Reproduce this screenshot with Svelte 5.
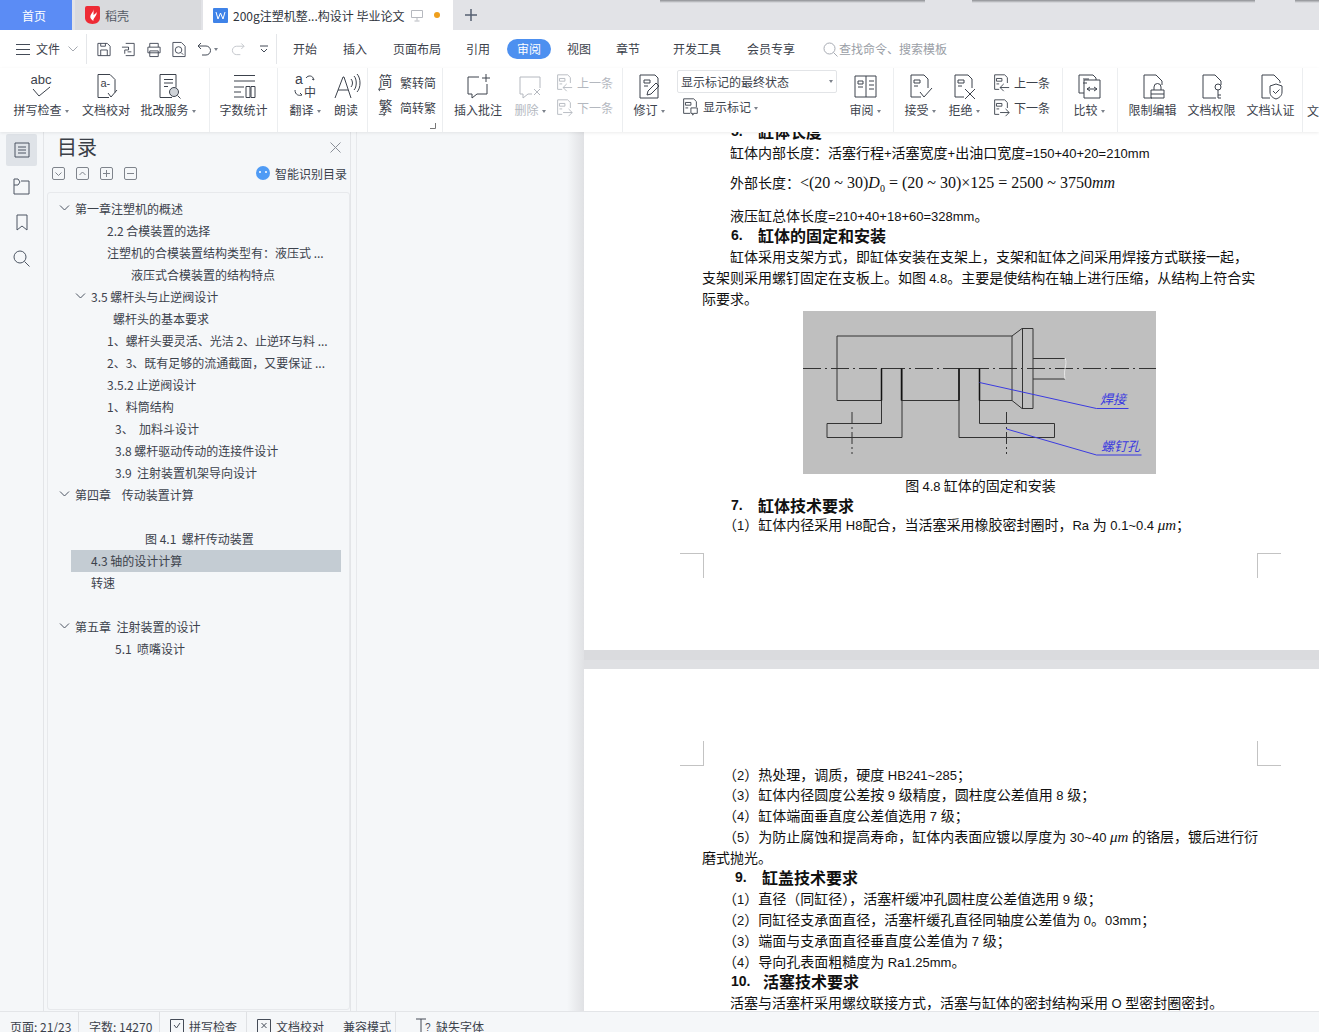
<script lang="ts">
  const ICONS: Record<string, string> = {
    spell: '<text x="14" y="12" text-anchor="middle" font-size="13" font-family="Liberation Sans" fill="currentColor" stroke="none">abc</text><path d="M6 17l6 7L23 15"/>',
    proof: '<path d="M6 2.500h12l5 5v13M6 2.500v23h11"/><text x="8.500" y="15" font-size="11" font-family="Liberation Sans" fill="currentColor" stroke="none">a-</text><path d="M16 21l3 4 6-7"/>',
    correct: '<path d="M6 2.500h16v13M6 2.500v23h12M10 7.500h9M10 11h9M10 14.500h4"/><circle cx="20" cy="20" r="4.500" fill="#cfd3d8"/><path d="M23.500 23.500l3 3"/>',
    count: '<path d="M4 3.500h21M4 9h21M4 15h10M4 20h7M4 25h10M16 14.500h4v11h-4zM21 14.500h4v11h-4z"/>',
    translate: '<text x="4" y="12" font-size="14" font-family="Liberation Sans" fill="currentColor" stroke="none">a</text><text x="13" y="25" font-size="12" font-family="Noto Sans CJK SC" fill="currentColor" stroke="none">中</text><path d="M15 6c2-3 7-3 8 2l-2-1M4 18c0 5 4 6 7 5l-2-2"/>',
    read: '<path d="M3 26L11 5h1l7 21M6 18h10M19 7c2 2 2 6 0 8M22 4c3 3 3 11 0 14M25 2c4 4 4 14 0 18"/>',
    comment: '<path d="M15 5H4v17h4v4l5-4h10V12M22 2v8M18 6h8"/>',
    delcmt: '<path d="M4 5h20v11M4 5v17h3v4l5-4h4M18 17l6 6M24 17l-6 6"/>',
    revise: '<path d="M6 3h14l3 3v20H5V3zM9 8h6v3H9zM9 14h4"/><path d="M12 23l1-4 8-8 3 3-8 8z"/>',
    pane: '<path d="M4 4h21v21H4zM15 4v21M7 9h5v3H7zM7 15h5M18 9h5M18 13h5M18 17h5"/>',
    accept: '<path d="M5 3h13l4 4v9M5 3v22h10M8 8h6v3H8zM8 14h4M14 20l4 5 8-9"/>',
    reject: '<path d="M5 3h13l4 4v9M5 3v22h9M8 8h6v3H8zM8 14h4M15 17l10 10M25 17L15 27"/>',
    compare: '<path d="M4 3h14l3 3v2M4 3v18h5M9 8h16v18H9zM8 7h6M8 11h4M12 17h10M12 17l3-2M12 17l3 2M22 17l-3-2M22 17l-3 2"/>',
    lock: '<path d="M5 3h12l6 6v4M5 3v23h8M12 18h13v8H12zM15 18v-3a3.500 3.500 0 0 1 7 0v3"/><path d="M12 22h13"/>',
    perm: '<path d="M5 3h12l6 6v4M5 3v23h13"/><circle cx="20" cy="15" r="3"/><path d="M20 18v8M20 23h3M20 26h3"/>',
    cert: '<path d="M5 3h12l6 6v2M5 3v23h8M13 14l6-2 6 2v6c0 4-3 6-6 7-3-1-6-3-6-7zM16 19l2.500 2.500 4-4"/>',
    docnext: '<path d="M3 2h11l3 3v6M3 2v16h5M5 6h6v3H5zM5 12h3M9 16h10M15 12l4 4-4 4"/>',
    docprev: '<path d="M3 2h11l3 3v6M3 2v16h5M5 6h6v3H5zM5 12h3M19 16H9M13 12l-4 4 4 4"/>',
    mark: '<path d="M3 2h11l3 3v6M3 2v16h7M5 6h6v3H5zM5 12h3M11 12h7v6h-4l-1 2v-2h-2z"/>',
    t2s: '<text x="1" y="14" font-size="15" font-family="Noto Sans CJK SC" fill="currentColor" stroke="none">简</text><path d="M1 18h7M2 16l-1 2 1 2"/>',
    s2t: '<text x="1" y="14" font-size="15" font-family="Noto Sans CJK SC" fill="currentColor" stroke="none">繁</text><path d="M1 18h7M6 16l2 2-2 2"/>',
  };

  const QUICK = [
    '<path d="M2 2h10l3 3v10H2zM5 15V9h7v6M5 2v3h5V2"/>',
    '<path d="M5 2h9v13H5M1 6h7v3H4v4M8 6v2M7 11h4"/>',
    '<path d="M4 6V2h9v4M2 6h13v6H2zM4 10h9v6H4z"/>',
    '<path d="M2 1h9l4 4v11H2z"/><circle cx="8" cy="9" r="3.500"/><path d="M11 12l2 2"/>',
  ];

  const MENU = [
    { t: "开始", w: 40 },
    { t: "插入", w: 60 },
    { t: "页面布局", w: 64 },
    { t: "引用", w: 58 },
    { t: "审阅", w: 44, active: true },
    { t: "视图", w: 56 },
    { t: "章节", w: 42 },
    { t: "开发工具", w: 96 },
    { t: "会员专享", w: 52 },
  ];

  const TOC = [
    { t: "第一章注塑机的概述", x: 75, chev: true },
    { t: "2.2 合模装置的选择", x: 107 },
    { t: "注塑机的合模装置结构类型有：液压式 ...", x: 107 },
    { t: "液压式合模装置的结构特点", x: 131 },
    { t: "3.5 螺杆头与止逆阀设计", x: 91, chev: true },
    { t: "螺杆头的基本要求", x: 113 },
    { t: "1、螺杆头要灵活、光洁 2、止逆环与料 ...", x: 107 },
    { t: "2、3、既有足够的流通截面，又要保证 ...", x: 107 },
    { t: "3.5.2 止逆阀设计", x: 107 },
    { t: "1、料筒结构", x: 107 },
    { t: "3、  加料斗设计", x: 115 },
    { t: "3.8 螺杆驱动传动的连接件设计", x: 115 },
    { t: "3.9  注射装置机架导向设计", x: 115 },
    { t: "第四章    传动装置计算", x: 75, chev: true },
    { t: "", x: 75 },
    { t: "图 4.1  螺杆传动装置", x: 145 },
    { t: "4.3 轴的设计计算", x: 91, active: true },
    { t: "转速", x: 91 },
    { t: "", x: 75 },
    { t: "第五章  注射装置的设计", x: 75, chev: true },
    { t: "5.1  喷嘴设计", x: 115 },
  ];

  const PAGE2 = [
    { t: "（2）热处理，调质，硬度 HB241~285；" },
    { t: "（3）缸体内径圆度公差按 9 级精度，圆柱度公差值用 8 级；" },
    { t: "（4）缸体端面垂直度公差值选用 7 级；" },
    { t: "（5）为防止腐蚀和提高寿命，缸体内表面应镀以厚度为 30~40 ", um: true, t2: " 的铬层，镀后进行衍" },
    { t: "磨式抛光。", flush: true },
    { n: "9.", t: "缸盖技术要求", x: 33, w: 27 },
    { t: "（1）直径（同缸径），活塞杆缓冲孔圆柱度公差值选用 9 级；" },
    { t: "（2）同缸径支承面直径，活塞杆缓孔直径同轴度公差值为 0。03mm；" },
    { t: "（3）端面与支承面直径垂直度公差值为 7 级；" },
    { t: "（4）导向孔表面粗糙度为 Ra1.25mm。" },
    { n: "10.", t: "活塞技术要求", x: 29, w: 32 },
    { t: "活塞与活塞杆采用螺纹联接方式，活塞与缸体的密封结构采用 O 型密封圈密封。" },
  ];

  // CJK and Latin use different sizes in the document, split text into runs
  function runs(s: string) {
    return s.match(/[\x20-\x7e]+|[^\x20-\x7e]+/g) ?? [];
  }
  const isLat = (r: string) => /^[\x20-\x7e]/.test(r);
</script>

{#snippet icon(name: string, size = 28)}
  <svg class="ic" width={size} height={size} viewBox="0 0 28 28" fill="none" stroke="currentColor">{@html ICONS[name]}</svg>
{/snippet}

{#snippet big(name: string, label: string, w: number, caret = false, off = false)}
  <div class="big" class:off style={`width:${w}px`}>
    {@render icon(name)}
    <span class="lb">{label}{#if caret}<i class="caret"></i>{/if}</span>
  </div>
{/snippet}

{#snippet small(name: string, label: string, off = false, caret = false)}
  <div class="small" class:off>
    <svg class="ic" width="20" height="20" viewBox="0 0 20 22" fill="none" stroke="currentColor">{@html ICONS[name]}</svg>
    <span>{label}{#if caret}<i class="caret"></i>{/if}</span>
  </div>
{/snippet}

{#snippet line(text: string)}
  {#each runs(text) as r}{#if isLat(r)}<span class="lat">{r}</span>{:else}{r}{/if}{/each}
{/snippet}

<div class="app">
  <header class="tabs">
    <div class="tab home">首页</div>
    <div class="tab daoke">
      <svg width="15" height="18" viewBox="0 0 15 18">
        <path d="M2 0h11a2 2 0 0 1 2 2v10c0 3-3 6-7.500 6S0 15 0 12V2a2 2 0 0 1 2-2z" fill="#ee2b35" />
        <path d="M8.500 3c0 4-4 5-3 9 1 2 3 3 3 3-1-3 4-5 3-9-1 2-2 2-3 3z" fill="#fff" />
      </svg>
      <span>稻壳</span>
    </div>
    <div class="tab doc-tab">
      <svg class="w" width="15" height="15" viewBox="0 0 15 15">
        <rect width="15" height="15" rx="1" fill="#3f83e8" />
        <path d="M3 4l2 7 2.500-6 2.500 6 2-7" fill="none" stroke="#fff" />
      </svg>
      <span class="title">200g注塑机整...构设计 毕业论文</span>
      <svg class="mon" width="12" height="13" viewBox="0 0 12 13" fill="none" stroke="#b6b9bf">
        <path d="M.5 1.500h11v7H.5zM6 8.500v3M3.500 12h5" />
      </svg>
      <i class="dot"></i>
    </div>
    <svg class="plus" width="12" height="12" viewBox="0 0 12 12" stroke="#566072" stroke-width="1.500">
      <path d="M6 0v12M0 6h12" />
    </svg>
  </header>

  <nav class="menu">
    <svg class="burger" width="14" height="11" viewBox="0 0 14 11" stroke="#444b57"><path d="M0 .5h14M0 5.500h14M0 10.500h14" /></svg>
    <span class="file">文件</span>
    <svg class="filech" width="10" height="6" viewBox="0 0 10 6" fill="none" stroke="#a5a9b0"><path d="M.5.5L5 5l4.500-4.500" /></svg>
    <i class="msep"></i>
    <div class="quick">
      {#each QUICK as q}
        <svg width="16" height="17" viewBox="0 0 17 17" fill="none" stroke="#444b57">{@html q}</svg>
      {/each}
    </div>
    <svg class="undo" width="15" height="15" viewBox="0 0 15 15" fill="none" stroke="#444b57"><path d="M4 1L1 4l3 3M1 4h8a4.500 4.500 0 0 1 0 9H5" /></svg>
    <i class="caret cu"></i>
    <svg class="redo" width="14" height="15" viewBox="0 0 15 15" fill="none" stroke="#c2c5ca"><path d="M11 1l3 3-3 3M14 4H6a4.500 4.500 0 0 0 0 9h4" /></svg>
    <svg class="more" width="8" height="8" viewBox="0 0 8 8" fill="none" stroke="#444b57"><path d="M0 1h8M1 4l3 3 3-3" /></svg>
    <i class="msep last"></i>
    {#each MENU as m}
      <span class="mi" class:active={m.active} style={`width:${m.w}px`}>{m.t}</span>
    {/each}
    <div class="search">
      <svg width="15" height="15" viewBox="0 0 15 15" fill="none" stroke="#a7abb3"><circle cx="6.500" cy="6.500" r="5.500" /><path d="M10.500 10.500l4 4" /></svg>
      <span>查找命令、搜索模板</span>
    </div>
  </nav>

  <section class="ribbon">
    <div class="grp" style="width:210px;padding-left:8px">
      {@render big("spell", "拼写检查", 66, true)}
      {@render big("proof", "文档校对", 64)}
      {@render big("correct", "批改服务", 60, true)}
    </div>
    <div class="grp" style="width:68px">
      {@render big("count", "字数统计", 67)}
    </div>
    <div class="grp" style="width:90px;padding-left:7px">
      {@render big("translate", "翻译", 40, true)}
      {@render big("read", "朗读", 42)}
    </div>
    <div class="grp col" style="width:75px;padding-left:9px">
      {@render small("t2s", "繁转简")}
      {@render small("s2t", "简转繁")}
      <svg class="launch" width="6" height="6" viewBox="0 0 6 6" fill="none" stroke="#777"><path d="M0 5.500h5.500V0" /></svg>
    </div>
    <div class="grp" style="width:180px;padding-left:6px">
      {@render big("comment", "插入批注", 58)}
      {@render big("delcmt", "删除", 46, true, true)}
      <div class="col2" style="margin-left:1px">
        {@render small("docprev", "上一条", true)}
        {@render small("docnext", "下一条", true)}
      </div>
    </div>
    <div class="grp" style="width:271px;padding-left:5px">
      {@render big("revise", "修订", 42, true)}
      <div class="state">
        <div class="select"><span>显示标记的最终状态</span><i class="caret"></i></div>
        {@render small("mark", "显示标记", false, true)}
      </div>
      {@render big("pane", "审阅", 42, true)}
    </div>
    <div class="grp" style="width:169px;padding-left:5px">
      {@render big("accept", "接受", 42, true)}
      {@render big("reject", "拒绝", 46, true)}
      <div class="col2" style="margin-left:4px">
        {@render small("docprev", "上一条")}
        {@render small("docnext", "下一条")}
      </div>
    </div>
    <div class="grp" style="width:55px">
      {@render big("compare", "比较", 52, true)}
    </div>
    <div class="grp" style="width:185px;padding-left:5px">
      {@render big("lock", "限制编辑", 59)}
      {@render big("perm", "文档权限", 59)}
      {@render big("cert", "文档认证", 59)}
    </div>
    <div class="grp cut"><span class="lb">文档</span></div>
  </section>

  <main class="body">
    <aside class="strip">
      <div class="si on">
        <svg width="16" height="16" viewBox="0 0 16 16" fill="none" stroke="#4c5563"><path d="M1 1h14v14H1zM4 5h8M4 8h8M4 11h8" /></svg>
      </div>
      <div class="si">
        <svg width="17" height="17" viewBox="0 0 17 17" fill="none" stroke="#4c5563"><path d="M1 1h4l2 3-2 3H1zM8 3h8M1 7v9h15V3" /></svg>
      </div>
      <div class="si">
        <svg width="12" height="17" viewBox="0 0 12 17" fill="none" stroke="#4c5563"><path d="M1 1h10v15l-5-4-5 4z" /></svg>
      </div>
      <div class="si">
        <svg width="17" height="17" viewBox="0 0 17 17" fill="none" stroke="#4c5563"><circle cx="7" cy="7" r="6" /><path d="M11.500 11.500l5 5" /></svg>
      </div>
    </aside>

    <aside class="panel">
      <div class="phead">
        <h2>目录</h2>
        <svg width="11" height="11" viewBox="0 0 11 11" stroke="#8a8f98"><path d="M.5.5l10 10M10.500.5l-10 10" /></svg>
      </div>
      <div class="ptools">
        {#each ["M3.500 5.500l3 3 3-3", "M3.500 8l3-3 3 3", "M3 6.500h7M6.500 3v7", "M3 6.500h7"] as d}
          <svg class="pt" width="13" height="13" viewBox="0 0 13 13" fill="none" stroke="#7f848c"><rect x=".5" y=".5" width="12" height="12" rx="1.500" /><path {d} /></svg>
        {/each}
        <span class="smart">
          <svg width="14" height="14" viewBox="0 0 14 14"><circle cx="7" cy="7" r="7" fill="#4f9bf5" /><circle cx="4" cy="6" r="1" fill="#fff" /><circle cx="10" cy="6" r="1" fill="#fff" /></svg>
          智能识别目录
        </span>
      </div>
      <div class="toc">
        {#each TOC as r}
          <div class="row" class:active={r.active} style={`padding-left:${r.x - (r.active ? 71 : 48) - (r.chev ? 16 : 0)}px`}>
            {#if r.chev}
              <svg class="chev" width="16" height="6" viewBox="0 0 16 6" fill="none" stroke="#4c5563"><path d="M1 .5L5.500 5 10 .5" /></svg>
            {/if}
            <span>{r.t}</span>
          </div>
        {/each}
      </div>
    </aside>

    <div class="docarea">
      <article class="page p1">
        <div class="inner">
          <h3 class="dh" style="padding-left:29px"><b style="width:27px">5.</b>缸体长度</h3>
          <p class="ln first">{@render line("缸体内部长度：活塞行程+活塞宽度+出油口宽度=150+40+20=210mm")}</p>
          <p class="ln first math">外部长度：<span class="f">&lt;(20 ~ 30)<em>D</em><sub>0</sub> = (20 ~ 30)×125 = 2500 ~ 3750<em>mm</em></span></p>
          <p class="ln first total">{@render line("液压缸总体长度=210+40+18+60=328mm。")}</p>
          <h3 class="dh" style="padding-left:29px"><b style="width:27px">6.</b>缸体的固定和安装</h3>
          <p class="para">缸体采用支架方式，即缸体安装在支架上，支架和缸体之间采用焊接方式联接一起，支架则采用螺钉固定在支板上。如图 <span class="lat">4.8</span>。主要是使结构在轴上进行压缩，从结构上符合实际要求。</p>
          <svg class="fig" width="353" height="163" viewBox="0 0 353 163" fill="none" stroke="#333">
            <rect width="353" height="163" fill="#bfbfbf" stroke="none" />
            <path d="M0 57.500h353" stroke-dasharray="18 4 2 4" />
            <path d="M34 25h175M34 25v64.500h44.500M98.500 89.500H156M176.500 89.500H209M209 25l10-7.500h11v80h-11l-10-8M219.500 17.500v80M209 25v64.500M230 47.500h32M230 68h32" />
            <path d="M78.500 57.500v55H24v14h75v-69M78.500 57.500h20" />
            <path d="M156 57.500v69h95.500v-14h-75v-55M156 57.500h20" />
            <path d="M78.500 57.500v32M98.500 57.500v32M156 57.500v32M176.500 57.500v32" stroke-width="1.500" stroke="#111" />
            <path d="M49 101v42M203.500 101v42" stroke-dasharray="12 3 2 3" />
            <path d="M262 47c3 7-2 10 0 21" stroke="#e8e8e8" />
            <path d="M176.500 71.500l117 26h32M203.500 118l90 26h45" stroke="#3b3be0" />
            <text class="ftx" x="297" y="93">焊接</text>
            <text class="ftx" x="298" y="140">螺钉孔</text>
          </svg>
          <p class="cap">图 <span class="lat">4.8</span>  缸体的固定和安装</p>
          <h3 class="dh" style="padding-left:29px"><b style="width:27px">7.</b>缸体技术要求</h3>
          <p class="ln par last">{@render line("（1）缸体内径采用 H8配合，当活塞采用橡胶密封圈时，Ra 为 0.1~0.4 ")}<em class="um">μm</em>；</p>
        </div>
        <i class="crop tl"></i>
        <i class="crop tr"></i>
      </article>

      <div class="gap"></div>

      <article class="page p2">
        <i class="crop bl"></i>
        <i class="crop br"></i>
        <div class="inner">
          {#each PAGE2 as l}
            {#if l.n}
              <h3 class="dh" style={`padding-left:${l.x}px`}><b style={`width:${l.w}px`}>{l.n}</b>{l.t}</h3>
            {:else}
              <p class="ln" class:first={!l.flush && !l.t.startsWith("（")} class:par={l.t.startsWith("（")}>
                {@render line(l.t)}{#if l.um}<em class="um">μm</em>{@render line(l.t2 ?? "")}{/if}
              </p>
            {/if}
          {/each}
        </div>
      </article>
    </div>
  </main>

  <footer class="status">
    <span class="st" style="width:79px">页面: 21/23</span>
    <span class="st" style="width:81px">字数: 14270</span>
    <span class="st" style="width:87px">
      <svg width="14" height="14" viewBox="0 0 14 14" fill="none" stroke="#444b57"><path d="M.5.5h13v13H.5zM4 6l2.500 3L10 4" /></svg>
      拼写检查
    </span>
    <span class="st plain" style="width:86px">
      <svg width="14" height="14" viewBox="0 0 14 14" fill="none" stroke="#444b57"><path d="M.5.5h13v13H.5zM4.500 4l5 5M9.500 4l-5 5" /></svg>
      文档校对
    </span>
    <span class="st" style="width:63px">兼容模式</span>
    <span class="st plain missing">
      <svg width="16" height="16" viewBox="0 0 16 16" fill="none" stroke="#444b57"><path d="M1 1h10M6 1v14M4 15h4" /><text x="10" y="13" font-size="10" font-family="Liberation Sans" fill="#444b57" stroke="none">?</text></svg>
      缺失字体
    </span>
  </footer>
</div>

<style>
  :global(body) {
    margin: 0;
    background: #fff;
  }
  .app {
    width: 1319px;
    height: 1032px;
    overflow: hidden;
    display: flex;
    flex-direction: column;
    font-family: "Noto Sans CJK SC", "Noto Sans", sans-serif;
    font-size: 12px;
    color: #3c424c;
  }
  .ic {
    overflow: visible;
    flex: none;
  }
  .caret {
    display: inline-block;
    width: 0;
    height: 0;
    margin-left: 3px;
    vertical-align: 2px;
    border: 2.5px solid transparent;
    border-top: 3px solid #7c828b;
    border-bottom: 0;
  }

  /* tab strip */
  .tabs {
    flex: none;
    height: 30px;
    display: flex;
    align-items: stretch;
    background:
      linear-gradient(#8d8f93, #e2e3e7) 660px 0 / 265px 3px no-repeat,
      linear-gradient(#8d8f93, #e2e3e7) 972px 0 / 283px 3px no-repeat,
      linear-gradient(#8d8f93, #e2e3e7) 1295px 0 / 24px 3px no-repeat,
      #e2e3e7;
  }
  .tab {
    display: flex;
    align-items: center;
  }
  .home {
    width: 72px;
    padding-left: 22px;
    box-sizing: border-box;
    background: #5b8cf5;
    color: #fff;
  }
  .daoke {
    width: 126px;
    margin-left: 3px;
    padding-left: 10px;
    box-sizing: border-box;
    gap: 5px;
    background: #d9dadd;
    color: #555b65;
  }
  .doc-tab {
    width: 250px;
    margin-left: 2px;
    padding-left: 10px;
    box-sizing: border-box;
    background: #fff;
    color: #30353d;
  }
  .title {
    margin-left: 5px;
    width: 176px;
    white-space: nowrap;
  }
  .mon {
    margin-left: 2px;
  }
  .dot {
    width: 6px;
    height: 6px;
    margin-left: 11px;
    border-radius: 50%;
    background: #ef9f1c;
  }
  .plus {
    align-self: center;
    margin-left: 12px;
  }

  /* menu row */
  .menu {
    flex: none;
    height: 38px;
    display: flex;
    align-items: center;
    background: #fff;
    color: #3c424c;
  }
  .burger {
    margin-left: 16px;
  }
  .file {
    margin-left: 6px;
    padding-bottom: 2px;
  }
  .filech {
    margin-left: 8px;
  }
  .msep {
    width: 1px;
    height: 30px;
    margin: 0 9px 0 8px;
    background: #e4e6e9;
  }
  .msep.last {
    margin: 0 8px 0 8px;
  }
  .quick {
    display: flex;
    gap: 9px;
  }
  .undo {
    margin-left: 10px;
  }
  .cu {
    margin-left: 2px;
    margin-right: 13px;
  }
  .more {
    margin-left: 15px;
  }
  .mi {
    text-align: center;
    flex: none;
    white-space: nowrap;
    padding-bottom: 2px;
  }
  .mi.active {
    height: 20px;
    padding-bottom: 0;
    line-height: 19px;
    border-radius: 10px;
    background: #4d90f0;
    color: #fff;
  }
  .search {
    display: flex;
    align-items: center;
    gap: 1px;
    margin-left: 26px;
    color: #9a9ea6;
  }
  .search span {
    padding-bottom: 2px;
  }

  /* ribbon */
  .ribbon {
    flex: none;
    height: 64px;
    display: flex;
    background: #fff;
    position: relative;
    z-index: 1;
    box-shadow: 0 1px 3px rgba(0, 0, 0, 0.08);
  }
  .grp {
    position: relative;
    display: flex;
    flex: none;
    box-sizing: border-box;
    border-right: 1px solid #eceef0;
  }
  .grp.col {
    flex-direction: column;
    padding-top: 2px;
  }
  .grp.cut {
    border: 0;
    padding-top: 33px;
    padding-left: 4px;
  }
  .big {
    display: flex;
    flex-direction: column;
    align-items: center;
    flex: none;
    padding-top: 4px;
  }
  .lb {
    margin-top: 1px;
    line-height: 17px;
    white-space: nowrap;
  }
  .off {
    color: #b4b8bf;
  }
  .small {
    display: flex;
    align-items: center;
    gap: 3px;
    height: 25px;
    white-space: nowrap;
  }
  .launch {
    position: absolute;
    right: 6px;
    bottom: 3px;
  }
  .col2 {
    padding-top: 2px;
  }
  .state {
    width: 167px;
    padding-top: 2px;
    margin-left: 7px;
  }
  .select {
    width: 160px;
    height: 23px;
    box-sizing: border-box;
    display: flex;
    align-items: center;
    justify-content: space-between;
    padding: 0 3px;
    border: 1px solid #e2e4e7;
    border-radius: 2px;
  }
  .state .small {
    margin-top: 1px;
    margin-left: 3px;
  }

  /* sidebar */
  .body {
    flex: 1;
    min-height: 0;
    display: flex;
    background: #f5f7f9;
  }
  .strip {
    flex: none;
    width: 44px;
    box-sizing: border-box;
    padding: 2px 6px 0;
    border-right: 1px solid #e3e5e8;
    display: flex;
    flex-direction: column;
    gap: 4px;
  }
  .si {
    height: 32px;
    display: flex;
    align-items: center;
    justify-content: center;
    border-radius: 2px;
  }
  .si.on {
    background: #dfe3e8;
  }
  .panel {
    flex: none;
    width: 307px;
    box-sizing: border-box;
    border-right: 1px solid #e3e5e8;
    display: flex;
    flex-direction: column;
  }
  .phead {
    height: 30px;
    padding: 0 9px 0 13px;
    display: flex;
    align-items: center;
    justify-content: space-between;
  }
  h2 {
    margin: 0;
    font-size: 20px;
    font-weight: 400;
    line-height: 30px;
    color: #3a3f47;
  }
  .ptools {
    height: 22px;
    padding-left: 8px;
    padding-right: 3px;
    display: flex;
    align-items: center;
    gap: 11px;
  }
  .pt {
    flex: none;
  }
  .smart {
    margin-left: auto;
    display: flex;
    align-items: center;
    gap: 5px;
  }
  .toc {
    flex: 1;
    box-sizing: border-box;
    margin: 8px 0 1px 3px;
    padding-top: 5px;
    border: 1px solid #e7e9ec;
    border-radius: 3px;
    overflow: hidden;
  }
  .row {
    height: 22px;
    display: flex;
    align-items: center;
    white-space: pre;
    box-sizing: border-box;
    padding-bottom: 2px;
  }
  .row.active {
    margin: 0 8px 0 23px;
    background: #c4ccd3;
  }
  .chev {
    flex: none;
  }

  /* document */
  .docarea {
    flex: 1;
    min-width: 0;
    overflow: hidden;
    margin-left: 5px;
    border-left: 1px solid #e7e9ec;
    padding-left: 227px;
    background: linear-gradient(to right, transparent 210px, #e0e1e4 227px) no-repeat;
    color: #111;
    font-size: 14px;
  }
  .page {
    position: relative;
    width: 797px;
    background: #fff;
    overflow: hidden;
  }
  .p1 {
    height: 518px;
  }
  .p2 {
    height: 342px;
    padding-top: 94.5px;
    box-sizing: border-box;
  }
  .p1 .inner {
    margin-top: -11px;
  }
  .inner {
    width: 557px;
    padding-left: 118px;
  }
  .gap {
    width: 797px;
    height: 19px;
    background: linear-gradient(#dadbde 50%, #dfe0e3 50%);
  }
  .ln,
  .para,
  .cap {
    margin: 0;
    line-height: 20.8px;
    height: auto;
    white-space: pre;
  }
  .ln.first {
    padding-left: 28px;
  }
  .ln.par {
    padding-left: 21px;
  }
  .ln.last {
    margin-top: -2px;
  }
  .para {
    white-space: normal;
    text-indent: 28px;
  }
  .math {
    margin-top: 9px;
    line-height: 20px;
  }
  .total {
    margin-top: 13px;
  }
  .f {
    font-family: "Liberation Serif", serif;
    font-size: 16px;
    line-height: 0;
  }
  .f sub {
    font-size: 10px;
    line-height: 0;
  }
  .f em {
    font-weight: 400;
  }
  .dh {
    margin: 0;
    display: flex;
    height: 20.8px;
    line-height: 20.8px;
    font-size: 16px;
    font-weight: 700;
  }
  .dh b {
    flex: none;
    font-family: "Liberation Sans", sans-serif;
    font-size: 14px;
  }
  .lat {
    font-family: "Liberation Sans", sans-serif;
    font-size: 13px;
    line-height: 0;
  }
  .um {
    font-family: "Liberation Serif", serif;
    font-size: 15px;
    line-height: 0;
  }
  .fig {
    display: block;
    margin: 2px 0 0 101px;
  }
  .ftx {
    font-size: 13px;
    font-style: italic;
    fill: #3b3be0;
    stroke: none;
  }
  .cap {
    margin-top: 1px;
    text-align: center;
  }
  .crop {
    position: absolute;
    width: 23px;
    height: 24px;
    border: 0 solid #c3c3c3;
  }
  .tl {
    left: 96px;
    top: 421px;
    border-top-width: 1px;
    border-right-width: 1px;
  }
  .tr {
    left: 673px;
    top: 421px;
    border-top-width: 1px;
    border-left-width: 1px;
  }
  .bl {
    left: 96px;
    top: 72px;
    border-bottom-width: 1px;
    border-right-width: 1px;
  }
  .br {
    left: 673px;
    top: 72px;
    border-bottom-width: 1px;
    border-left-width: 1px;
  }

  /* status bar */
  .status {
    flex: none;
    height: 21px;
    display: flex;
    align-items: flex-start;
    background: #f5f7f9;
    border-top: 1px solid #e3e5e8;
    box-sizing: border-box;
    overflow: hidden;
    color: #3c424c;
  }
  .st {
    flex: none;
    box-sizing: border-box;
    display: flex;
    align-items: center;
    gap: 5px;
    height: 28px;
    padding-left: 10px;
    border-right: 1px solid #dfe1e4;
  }
  .st.plain {
    border-right: 0;
  }
  .missing {
    margin-left: 9px;
  }
</style>
